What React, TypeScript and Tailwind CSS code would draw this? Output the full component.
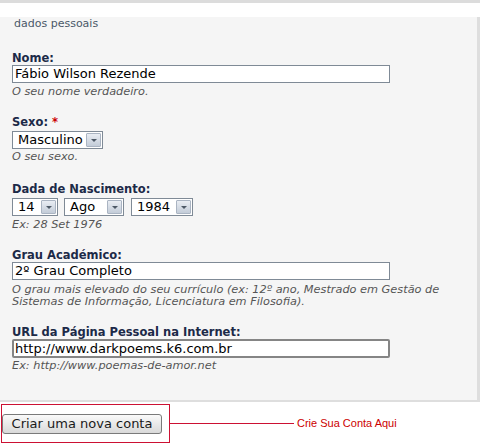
const font = { fontFamily: '"DejaVu Sans", Verdana, sans-serif' };

function Label({ text, required }: { text: string; required?: boolean }) {
  return (
    <div className="text-[11.5px] leading-[14px] font-bold text-[#1c2a48]">
      {text}
      {required && <span className="text-[#cc0000]"> *</span>}
    </div>
  );
}

function Help({ children, mt }: { children: React.ReactNode; mt: string }) {
  return (
    <div className={`text-[11.3px] leading-[12px] italic text-[#555] ${mt}`}>{children}</div>
  );
}

function Select({ value, w }: { value: string; w: string }) {
  return (
    <div
      className={`${w} h-[18px] bg-white border border-[#7f8a96] flex items-center justify-between pl-[5px] pr-[1px]`}
    >
      <span className="text-[13px] leading-[16px] text-black">{value}</span>
      <span className="w-[15px] h-[14px] border border-[#aab4c2] rounded-[1px] bg-gradient-to-b from-[#e9edf3] to-[#c3ccd8] flex items-center justify-center">
        <span className="w-0 h-0 border-l-[3px] border-r-[3px] border-t-[3px] border-l-transparent border-r-transparent border-t-[#4d5966]" />
      </span>
    </div>
  );
}

function TextInput({ value, thick }: { value: string; thick?: boolean }) {
  return (
    <input
      readOnly
      defaultValue={value}
      style={font}
      className={
        thick
          ? "block w-[378px] h-[19px] bg-white border-2 border-[#858585] rounded-[2px] px-[1px] text-[13px] text-black outline-none"
          : "block w-[378px] h-[18px] bg-white border border-[#7f8a96] px-[2px] text-[13px] text-black outline-none"
      }
    />
  );
}

export default function App() {
  return (
    <div className="w-[480px] h-[447px] bg-white" style={font}>
      <div className="h-[3px] bg-[#dcdcdc]" />
      <div className="h-[18px]" />
      <div className="bg-[#f5f5f5] border-r-[3px] border-b-[2px] border-[#dedede] pb-[28px]">
        <div className="-mt-[4px] pl-[14px] text-[11px] leading-[13px] text-[#4a5868]">
          dados pessoais
        </div>
        <div className="pl-[12px] flex flex-col">
          <div className="mt-[21px]">
            <Label text="Nome:" />
            <TextInput value="Fábio Wilson Rezende" />
            <Help mt="mt-[3px]">O seu nome verdadeiro.</Help>
          </div>

          <div className="mt-[17px]">
            <Label text="Sexo:" required />
            <div className="mt-[2px]">
              <Select value="Masculino" w="w-[91px]" />
            </div>
            <Help mt="mt-[2px]">O seu sexo.</Help>
          </div>

          <div className="mt-[19px]">
            <Label text="Dada de Nascimento:" />
            <div className="mt-[2px] flex gap-[6px]">
              <Select value="14" w="w-[46px]" />
              <Select value="Ago" w="w-[60px]" />
              <div className="ml-[1px]">
                <Select value="1984" w="w-[62px]" />
              </div>
            </div>
            <Help mt="mt-[3px]">Ex: 28 Set 1976</Help>
          </div>

          <div className="mt-[17px]">
            <Label text="Grau Académico:" />
            <TextInput value="2º Grau Completo" />
            <Help mt="mt-[4px]">
              O grau mais elevado do seu currículo (ex: 12º ano, Mestrado em Gestão de
              <br />
              Sistemas de Informação, Licenciatura em Filosofia).
            </Help>
          </div>

          <div className="mt-[17px]">
            <Label text="URL da Página Pessoal na Internet:" />
            <TextInput value="http://www.darkpoems.k6.com.br" thick />
            <Help mt="mt-[2px]">Ex: http://www.poemas-de-amor.net</Help>
          </div>
        </div>
      </div>

      <div className="mt-[2px] flex items-center">
        <div className="ml-[1px] w-[169px] h-[39px] bg-[#cc1133] p-px">
          <div className="h-full bg-white flex items-center">
            <button
              style={font}
              className="w-[160px] h-[20px] bg-gradient-to-b from-[#fafafa] to-[#d9d9d9] border border-[#7a7a7a] rounded-[3px] text-[13px] leading-[16px] text-[#1a1a1a]"
            >
              Criar uma nova conta
            </button>
          </div>
        </div>
        <div className="w-[124px] h-px bg-[#cc1133]" />
        <span
          className="ml-[3px] text-[11px] text-[#cc0000]"
          style={{ fontFamily: '"Liberation Sans", Arial, sans-serif' }}
        >
          Crie Sua Conta Aqui
        </span>
      </div>
    </div>
  );
}
